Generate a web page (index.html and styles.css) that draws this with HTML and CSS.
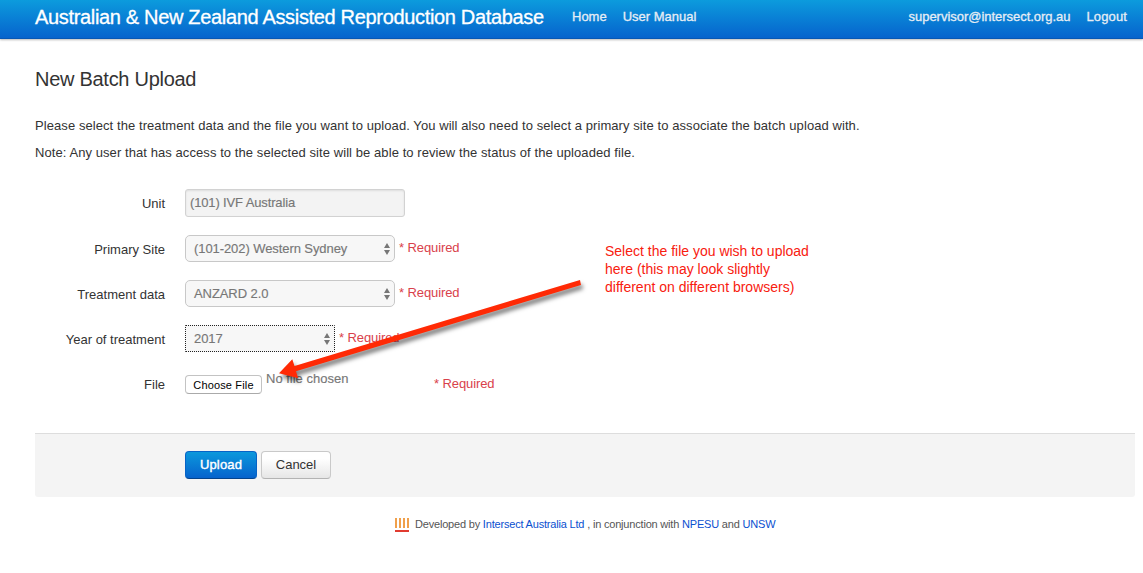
FILE: index.html
```html
<!DOCTYPE html>
<html lang="en">
<head>
<meta charset="utf-8">
<title>New Batch Upload</title>
<link rel="stylesheet" href="styles.css">
</head>
<body>
<header class="navbar">
  <a class="brand">Australian &amp; New Zealand Assisted Reproduction Database</a>
  <nav class="nav"><a>Home</a><a>User Manual</a></nav>
  <nav class="nav nav-right"><a class="nav-user">supervisor@intersect.org.au</a><a>Logout</a></nav>
</header>
<main class="content">
  <h1 class="title">New Batch Upload</h1>
  <p class="intro">Please select the treatment data and the file you want to upload. You will also need to select a primary site to associate the batch upload with.</p>
  <p class="intro intro-note">Note: Any user that has access to the selected site will be able to review the status of the uploaded file.</p>
  <form class="form">
    <div class="row row-unit">
      <label class="label">Unit</label>
      <div class="field input">(101) IVF Australia</div>
    </div>
    <div class="row">
      <label class="label">Primary Site</label>
      <div class="field select"><span class="site">(101-202) Western Sydney</span><svg class="arrows" viewBox="0 0 6 12"><path d="M0 5L3 0L6 5ZM0 7H6L3 12Z"/></svg></div>
      <span class="required">* Required</span>
    </div>
    <div class="row">
      <label class="label">Treatment data</label>
      <div class="field select"><span>ANZARD 2.0</span><svg class="arrows" viewBox="0 0 6 12"><path d="M0 5L3 0L6 5ZM0 7H6L3 12Z"/></svg></div>
      <span class="required">* Required</span>
    </div>
    <div class="row">
      <label class="label">Year of treatment</label>
      <div class="field select select-year"><span>2017</span><svg class="arrows" viewBox="0 0 6 12"><path d="M0 5L3 0L6 5ZM0 7H6L3 12Z"/></svg></div>
      <span class="required">* Required</span>
    </div>
    <div class="row">
      <label class="label">File</label>
      <div class="file"><button type="button" class="choose">Choose File</button><span class="chosen">No file chosen</span></div>
      <span class="required required-file">* Required</span>
    </div>
    <div class="actions">
      <button type="button" class="btn btn-primary">Upload</button>
      <button type="button" class="btn">Cancel</button>
    </div>
  </form>
</main>
<footer class="footer">
  <svg class="logo" viewBox="0 0 14 14"><path fill="#f0a04b" d="M0 0h2v10H0zM4 0h2v10H4zM8 0h2v10H8zM12 0h2v10h-2z"/><path fill="#e13b30" d="M0 12h14v2H0z"/></svg>
  <span class="credit">Developed by <a>Intersect Australia Ltd</a> , in conjunction with <a>NPESU</a> and <a>UNSW</a></span>
</footer>
<svg class="arrow" viewBox="0 0 340 130"><path d="M19 93.3L32.3 79.3L34.5 86L320 -.1L321 5L36 91.3L38.2 98.3Z"/></svg>
<div class="note">Select the file you wish to upload<br>here (this may look slightly<br>different on different browsers)</div>
</body>
</html>
```
FILE: styles.css
```css
* { box-sizing: border-box; }
body {
  margin: 0;
  height: 573px;
  overflow: hidden;
  position: relative;
  background: #fff;
  color: #333;
  font: 13px/18px "Liberation Sans", Arial, sans-serif;
}
.navbar {
  display: flex;
  align-items: center;
  height: 39px;
  padding: 0 16px 5px 35px;
  background: linear-gradient(#0c9bdd, #0663cd);
  border-bottom: 1px solid #0757b4;
  box-shadow: 0 1px 2px rgba(0, 0, 0, .28);
  color: #fff;
  white-space: nowrap;
}
.brand { width: 509px; font-size: 20px; letter-spacing: -.33px; -webkit-text-stroke: .3px #fff; }
.nav { display: flex; gap: 16px; margin-left: 28px; color: #e6edf5; -webkit-text-stroke: .3px #e6edf5; }
.nav-right { margin-left: auto; }
.nav-user { letter-spacing: -.03px; }
.nav-right a:last-child { letter-spacing: .12px; }
.content { padding: 30px 8px 0 35px; }
.title { margin: 0; font-size: 20px; line-height: 20px; font-weight: 400; letter-spacing: -.28px; height: 47px; }
.intro { margin: 0 0 9px; height: 18px; line-height: 20px; letter-spacing: .075px; white-space: nowrap; }
.intro-note { margin-bottom: 28px; }
.row { display: flex; height: 27px; margin-bottom: 18px; white-space: nowrap; }
.row-unit { height: 28px; }
.label { width: 130px; margin-right: 20px; padding-top: 6px; text-align: right; }
.field { border: 1px solid #c8c8c8; color: #777; -webkit-text-stroke: .15px #777; }
.input {
  width: 220px;
  padding: 4px;
  border-color: #d2d2d2;
  border-radius: 3px;
  background: #f3f3f3;
  box-shadow: inset 0 1px 2px rgba(0, 0, 0, .09);
  letter-spacing: -.14px;
}
.select {
  display: flex;
  justify-content: space-between;
  width: 210px;
  padding: 4px 4px 0 8px;
  border-radius: 5px;
  background: #f7f7f7;
  letter-spacing: -.08px;
}
.select-year { width: 150px; border: 1px dotted #222; border-radius: 1px; }
.arrows { width: 6px; height: 12px; margin-top: 3px; fill: #777; }
.required { margin-left: 4px; padding-top: 4px; color: #d9414b; letter-spacing: -.1px; }
.file { display: flex; align-items: flex-start; width: 245px; color: #777; }
.choose {
  width: 77px;
  height: 19px;
  margin: 5px 4px 0 0;
  padding: 0;
  border: 1px solid #c3c3c3;
  border-bottom-color: #aaa;
  border-radius: 4px;
  background: #fff;
  color: #000;
  font: 11px/16px "Liberation Sans", Arial, sans-serif;
  letter-spacing: .15px;
}
.chosen { -webkit-text-stroke: .15px #777; }
.required-file { padding-top: 5px; }
.actions {
  display: flex;
  gap: 4px;
  height: 64px;
  margin-top: 36px;
  padding: 17px 0 0 150px;
  border-top: 1px solid #ddd;
  border-radius: 0 0 3px 3px;
  background: #f4f4f4;
}
.row:nth-of-type(5) { margin-bottom: 36px; }
.btn {
  width: 70px;
  height: 28px;
  padding: 0 0 1px;
  border: 1px solid #c9c9c9;
  border-bottom-color: #b3b3b3;
  border-radius: 4px;
  background: linear-gradient(#fff 25%, #e6e6e6);
  color: #333;
  font: 13px/18px "Liberation Sans", Arial, sans-serif;
}
.btn-primary {
  width: 72px;
  border-color: #0763c6 #0763c6 #04438c;
  background: linear-gradient(#0b98dc, #0663cd);
  color: #fff;
  letter-spacing: .15px;
  -webkit-text-stroke: .4px #fff;
}
.footer { display: flex; padding: 18px 0 0 395px; color: #555; font-size: 11px; line-height: 18px; letter-spacing: -.19px; white-space: nowrap; }
.logo { width: 14px; height: 14px; margin: 3px 6px 0 0; }
.footer a { color: #0a50d0; }
.arrow {
  position: absolute;
  left: 260px;
  top: 280px;
  width: 340px;
  height: 130px;
  overflow: visible;
  fill: #ff2a05;
  filter: drop-shadow(2px 4px 2px rgba(0, 0, 0, .5));
}
.note { position: absolute; left: 605px; top: 242px; color: #f8200f; font-size: 14px; line-height: 18px; white-space: nowrap; }
```
